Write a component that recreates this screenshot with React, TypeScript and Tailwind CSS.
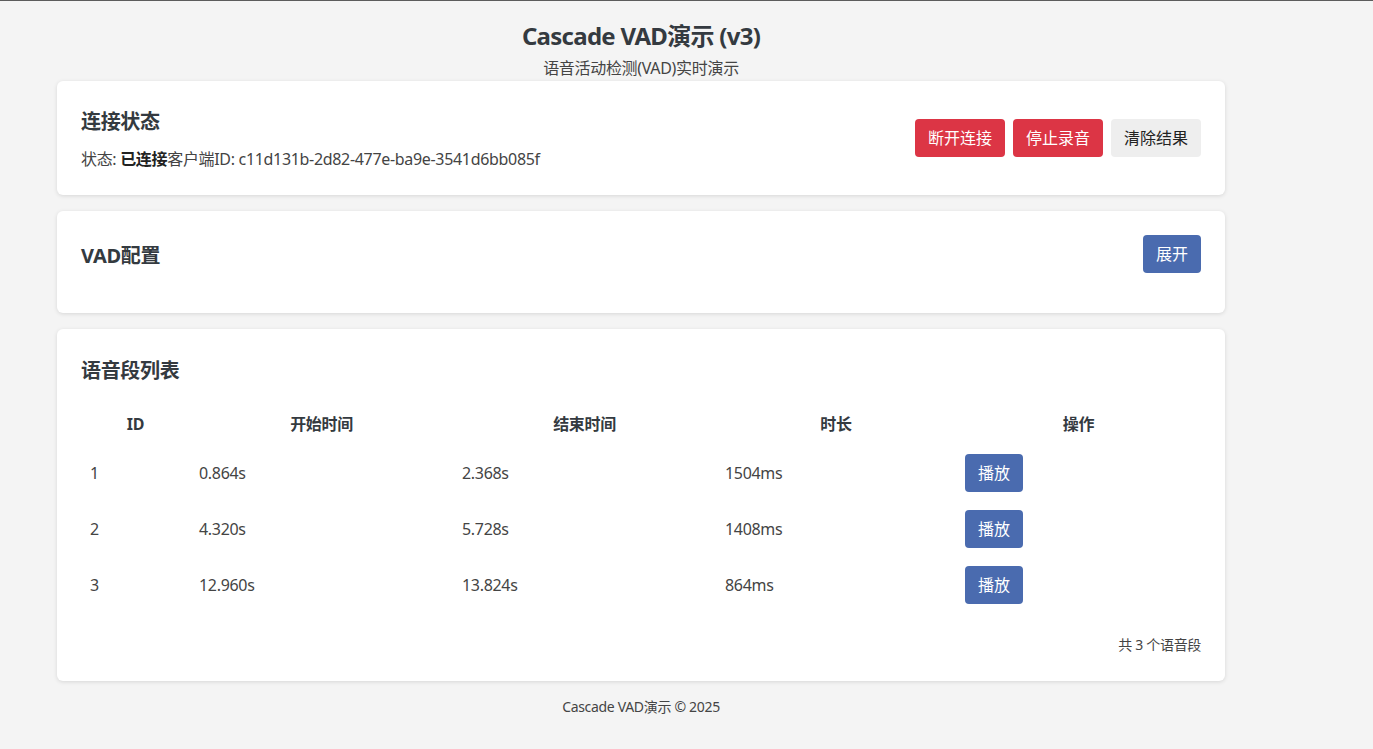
import React from "react";

interface Segment {
  id: number;
  start: string;
  end: string;
  duration: string;
}

const segments: Segment[] = [
  { id: 1, start: "0.864s", end: "2.368s", duration: "1504ms" },
  { id: 2, start: "4.320s", end: "5.728s", duration: "1408ms" },
  { id: 3, start: "12.960s", end: "13.824s", duration: "864ms" },
];

const font = { fontFamily: '"Noto Sans", "Noto Sans CJK SC", sans-serif' };

const App: React.FC = () => {
  return (
    <div className="min-h-[749px] bg-[#f4f4f4] border-t border-[#5c5c5c] text-[#444] tracking-[-0.02em]" style={font}>
      <div className="ml-[57px] w-[1168px]">
        <header className="pt-[19px] pb-px text-center">
          <h1 className="text-2xl leading-8 font-bold text-[#343a40] tracking-[-0.03em]">Cascade VAD演示 (v3)</h1>
          <p className="mt-1 text-base leading-6 text-[#444]">语音活动检测(VAD)实时演示</p>
        </header>

        <section className="bg-white rounded-md shadow-[0_1px_4px_rgba(0,0,0,0.12)] p-6 flex items-center justify-between">
          <div>
            <h2 className="mt-[3px] text-xl leading-7 font-bold text-[#343a40] mb-[11px]">连接状态</h2>
            <p className="text-base leading-6">
              状态: <strong className="font-bold text-[#222]">已连接</strong>客户端ID: c11d131b-2d82-477e-ba9e-3541d6bb085f
            </p>
          </div>
          <div className="flex gap-2 tracking-normal">
            <button className="h-[38px] px-[13px] rounded bg-[#dc3545] text-white text-base">断开连接</button>
            <button className="h-[38px] px-[13px] rounded bg-[#dc3545] text-white text-base">停止录音</button>
            <button className="h-[38px] px-[13px] rounded bg-[#eeeeee] text-[#222] text-base">清除结果</button>
          </div>
        </section>

        <section className="mt-4 bg-white rounded-md shadow-[0_1px_4px_rgba(0,0,0,0.12)] p-6">
          <div className="flex items-center justify-between mb-4">
            <h2 className="pt-1 text-xl leading-7 font-bold text-[#343a40]">VAD配置</h2>
            <button className="h-[38px] px-[13px] rounded bg-[#4a6baf] text-white text-base tracking-normal">展开</button>
          </div>
        </section>

        <section className="mt-4 bg-white rounded-md shadow-[0_1px_4px_rgba(0,0,0,0.12)] p-6">
          <h2 className="mt-1 text-xl leading-7 font-bold text-[#343a40] mb-[18px]">语音段列表</h2>
          <table className="w-full table-fixed border-collapse">
            <colgroup>
              <col className="w-[109px]" />
              <col className="w-[263px]" />
              <col className="w-[263px]" />
              <col className="w-[240px]" />
              <col className="w-[245px]" />
            </colgroup>
            <thead>
              <tr>
                <th className="py-[9px] px-[9px] leading-6 font-bold text-[#343a40]">ID</th>
                <th className="py-[9px] px-[9px] leading-6 font-bold text-[#343a40]">开始时间</th>
                <th className="py-[9px] px-[9px] leading-6 font-bold text-[#343a40]">结束时间</th>
                <th className="py-[9px] px-[9px] leading-6 font-bold text-[#343a40]">时长</th>
                <th className="py-[9px] px-[9px] leading-6 font-bold text-[#343a40]">操作</th>
              </tr>
            </thead>
            <tbody>
              {segments.map((s) => (
                <tr key={s.id}>
                  <td className="py-[9px] px-[9px] leading-6">{s.id}</td>
                  <td className="py-[9px] px-[9px] leading-6">{s.start}</td>
                  <td className="py-[9px] px-[9px] leading-6">{s.end}</td>
                  <td className="py-[9px] px-[9px] leading-6">{s.duration}</td>
                  <td className="py-[9px] px-[9px] leading-6">
                    <button className="h-[38px] px-[13px] rounded bg-[#4a6baf] text-white text-base align-middle tracking-normal">播放</button>
                  </td>
                </tr>
              ))}
            </tbody>
          </table>
          <p className="mt-5 text-sm leading-6 text-right text-[#444]">共 3 个语音段</p>
        </section>

        <footer className="mt-4 text-center text-sm leading-5 text-[#444]">Cascade VAD演示 © 2025</footer>
      </div>
    </div>
  );
};

export default App;
